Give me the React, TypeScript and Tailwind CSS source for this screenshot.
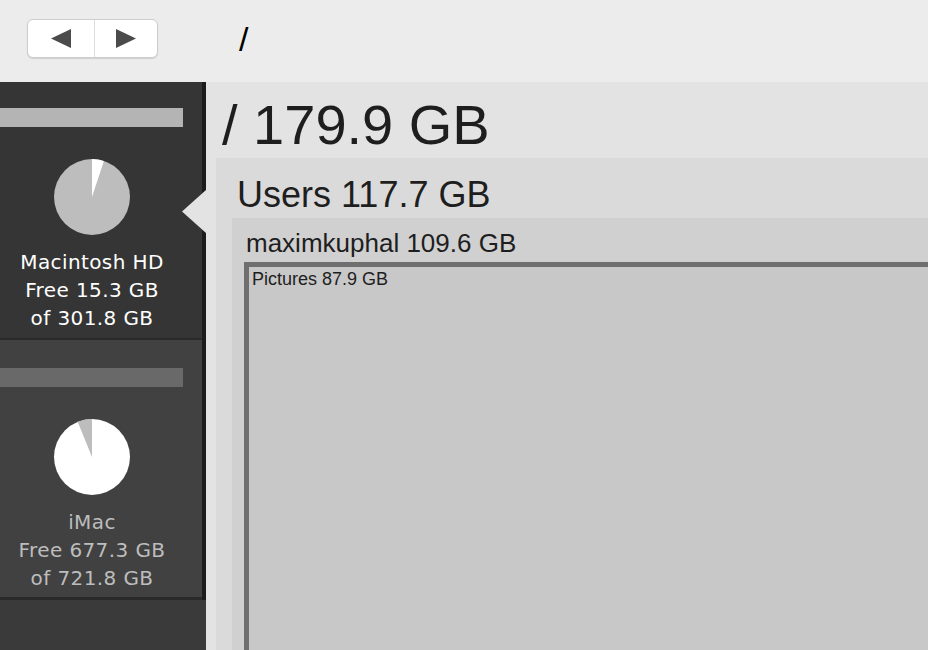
import React from 'react';

type Drive = {
  name: string;
  free: string;
  total: string;
  selected: boolean;
  usedDeg: number;
};

const drives: Drive[] = [
  { name: 'Macintosh HD', free: '15.3 GB', total: '301.8 GB', selected: true, usedDeg: 18.25 },
  { name: 'iMac', free: '677.3 GB', total: '721.8 GB', selected: false, usedDeg: 22.2 },
];

function Pie({ selected, deg }: { selected: boolean; deg: number }) {
  const r = 38;
  const rad = (deg * Math.PI) / 180;
  // selected drive: grey disk, white free slice clockwise from 12 o'clock
  // other drive: white disk, grey slice counter-clockwise from 12 o'clock
  const x = selected ? r + r * Math.sin(rad) : r - r * Math.sin(rad);
  const y = r - r * Math.cos(rad);
  const d = `M${r} ${r} L${r} 0 A${r} ${r} 0 0 ${selected ? 1 : 0} ${x} ${y} Z`;
  return (
    <svg width="76" height="76" viewBox="0 0 76 76">
      <circle cx={r} cy={r} r={r} fill={selected ? '#bdbdbd' : '#ffffff'} />
      <path d={d} fill={selected ? '#ffffff' : '#bdbdbd'} />
    </svg>
  );
}

function DriveItem({ drive }: { drive: Drive }) {
  return (
    <div
      className={`relative flex flex-col items-center ${
        drive.selected
          ? 'h-[258px] pt-[26px] border-b-2 border-[#2a2a2a] bg-[#353535]'
          : 'h-[260px] pt-[28px] border-b-[3px] border-[#2a2a2a] bg-[#414141]'
      }`}
    >
      {/* usage bar */}
      <div
        className={`self-start w-[183px] h-[19px] ${drive.selected ? 'bg-[#b4b4b4]' : 'bg-[#696969]'}`}
      />
      <div className="mt-[32px] w-[76px] h-[76px] -translate-x-[9px]">
        <Pie selected={drive.selected} deg={drive.usedDeg} />
      </div>
      <div
        className={`mt-[13px] -translate-x-[9px] text-center text-[20px] leading-[28px] tracking-[0.4px] ${
          drive.selected ? 'text-white' : 'text-[#bdbdbd]'
        }`}
        style={{ fontFamily: '"DejaVu Sans", Verdana, sans-serif' }}
      >
        <div>{drive.name}</div>
        <div>Free {drive.free}</div>
        <div>of {drive.total}</div>
      </div>

      {drive.selected && (
        <svg
          className="absolute -right-[4px] top-[108px]"
          width="24"
          height="43"
          viewBox="0 0 24 43"
        >
          <polygon points="24,0 0,21.5 24,43" fill="#e3e3e3" />
        </svg>
      )}
    </div>
  );
}

export default function App() {
  return (
    <div
      className="w-[928px] h-[650px] overflow-hidden flex flex-col bg-[#e3e3e3] text-[#1e1e1e]"
      style={{ fontFamily: '"Liberation Sans", Arial, sans-serif' }}
    >
      {/* Toolbar */}
      <div className="h-[82px] shrink-0 bg-[#ececec] flex items-start">
        <div className="mt-[19px] ml-[27px] w-[131px] h-[39px] flex bg-white rounded-[6px] border border-[#cdcdcd] shadow-[0_1px_1px_rgba(0,0,0,0.12)]">
          <button className="w-[67px] h-full flex items-center justify-center border-r border-[#dcdcdc]">
            <svg width="20" height="19" viewBox="0 0 20 19">
              <polygon points="20,0 0,9.5 20,19" fill="#4b4b4b" />
            </svg>
          </button>
          <button className="flex-1 h-full flex items-center justify-center">
            <svg width="20" height="19" viewBox="0 0 20 19">
              <polygon points="0,0 20,9.5 0,19" fill="#4b4b4b" />
            </svg>
          </button>
        </div>
        <div className="ml-[81px] mt-[22px] text-[34px] leading-none text-black">/</div>
      </div>

      <div className="flex-1 flex min-h-0">
        {/* Sidebar */}
        <div className="w-[206px] shrink-0 flex flex-col bg-[#3a3a3a]">
          <div className="border-r-[4px] border-[#1c1c1c]">
            {drives.map((d) => (
              <DriveItem key={d.name} drive={d} />
            ))}
          </div>
        </div>

        {/* Treemap */}
        <div className="flex-1 min-w-0 flex flex-col pl-[10px] pt-[15px] overflow-hidden">
          <div className="pl-[6px] text-[56px] leading-none">/ 179.9 GB</div>
          <div className="mt-[5px] flex-1 flex flex-col bg-[#dadada] pl-[16px]">
            <div className="pt-[19px] pl-[5px] text-[36px] leading-none">Users 117.7 GB</div>
            <div className="mt-[5px] flex-1 flex flex-col bg-[#d0d0d0] pl-[12px]">
              <div className="pt-[12px] pl-[2px] text-[26px] leading-none">maximkuphal 109.6 GB</div>
              <div className="mt-[6px] flex-1 bg-[#c8c8c8] border-[5px] border-r-0 border-b-0 border-[#6f6f6f] pl-[3px] pt-[3px]">
                <div className="text-[18px] leading-none">Pictures 87.9 GB</div>
              </div>
            </div>
          </div>
        </div>
      </div>
    </div>
  );
}
